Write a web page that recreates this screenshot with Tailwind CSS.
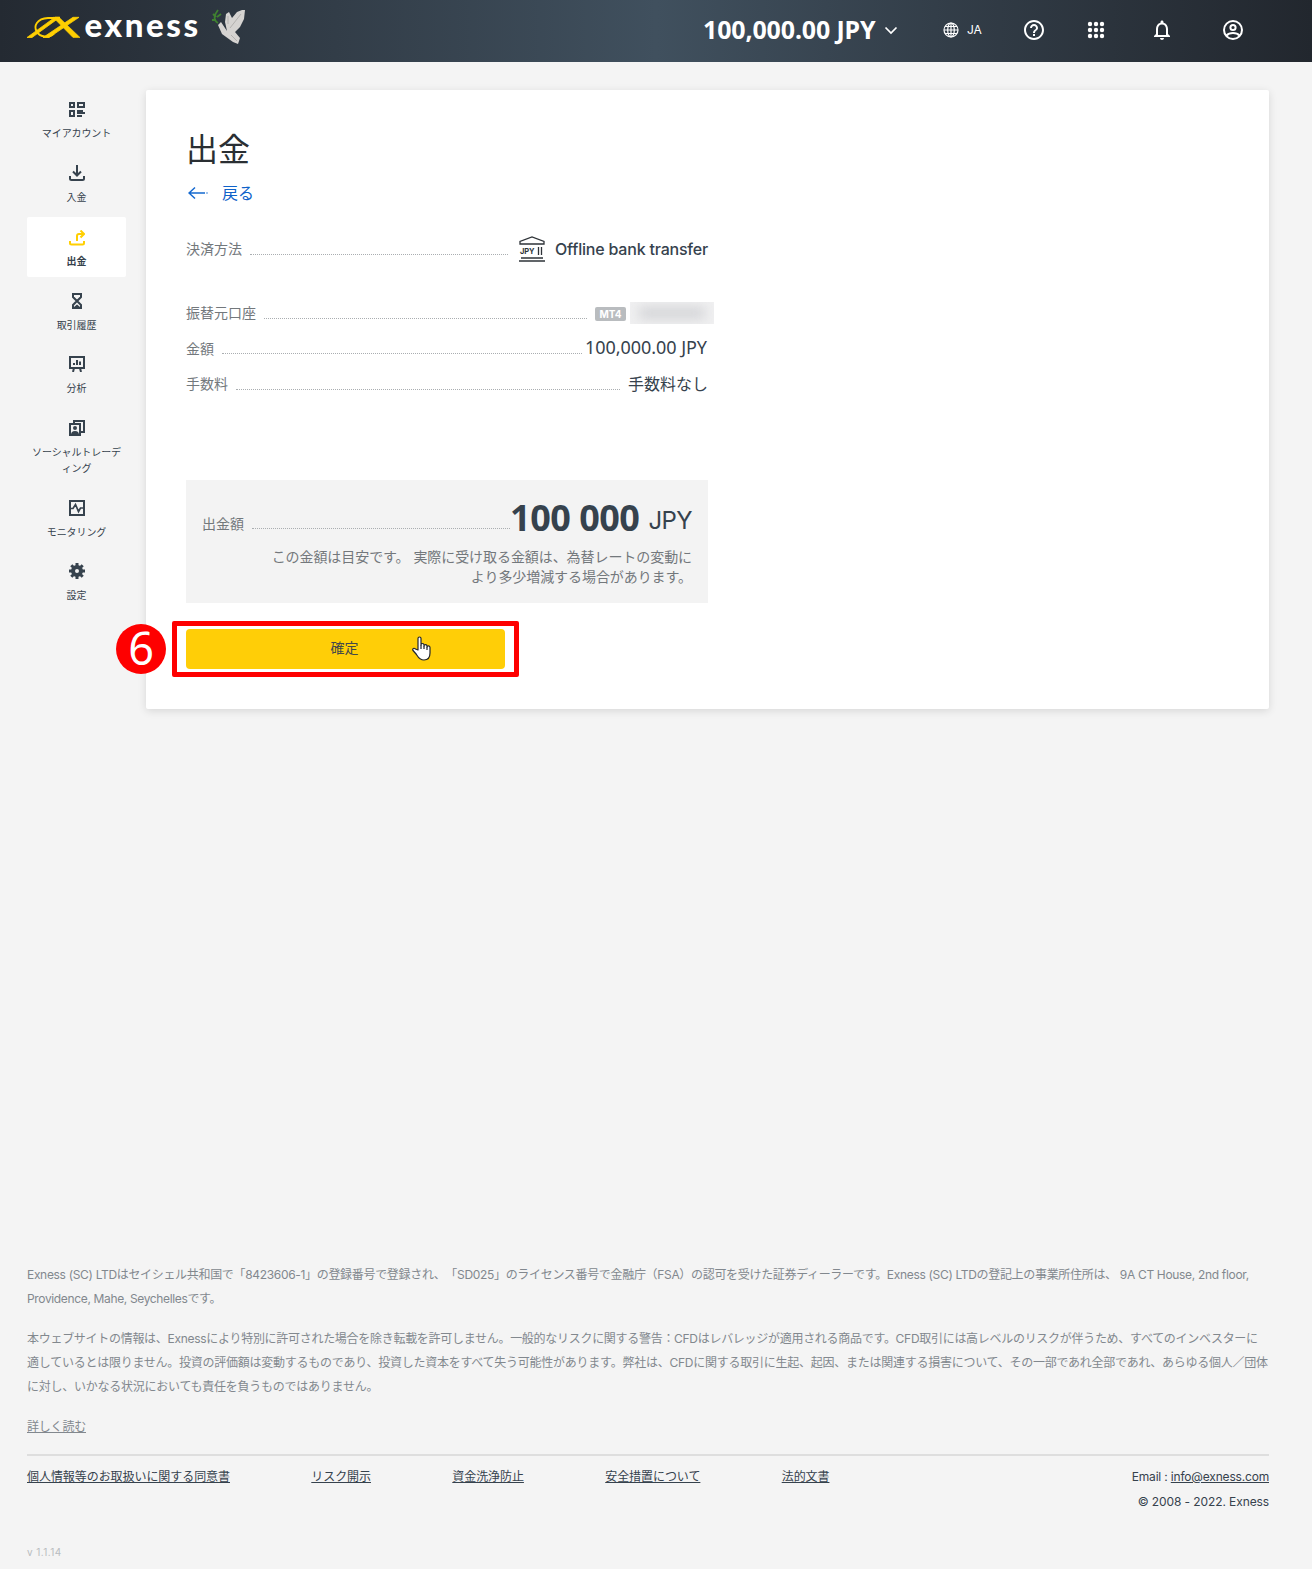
<!DOCTYPE html>
<html lang="ja">

<head>
    <meta charset="UTF-8" />
    <meta name="viewport" content="width=device-width, initial-scale=1.0" />
    <title>出金 - Exness</title>
    <script src="https://cdn.jsdelivr.net/npm/@tailwindcss/browser@4"></script>
</head>

<body class="bg-[#f4f4f4] font-['Inter','Noto_Sans_CJK_JP',sans-serif] text-[#36424d] w-[1312px] h-[1569px] overflow-hidden flex flex-col">

    <header class="h-[62px] pb-[2px] shrink-0 flex items-center text-white bg-linear-to-r from-[#242a32] via-[#40505e] to-[#22272e]">
        <svg class="w-[230px] h-[60px] ml-5 shrink-0" viewBox="20 0 230 60" fill="none">
            <g stroke="#ffcf01">
                <path d="M27 37.500 H32 L60 17.200 H55 Z" fill="#ffcf01" stroke-width="0.800" />
                <path d="M60 18 H48 C37 18.500 33 26 37 32 C40 37 49 38.500 54 33.500" stroke-width="1.900" />
                <path d="M43 37.500 H49 L79 17.300 H73 Z" fill="#ffcf01" stroke-width="0.800" />
                <path d="M53 17.300 H59 L80 37.500 H73 Z" fill="#ffcf01" stroke-width="0.600" />
            </g>
            <text x="84.500" y="37" textLength="113.500" font-family="Lato" font-weight="900" font-size="33" fill="#fff">exness</text>
            <path d="M227 31 L225 22 L226 14 L229 12 L232 18 L237 12 L242 10 L245 10 L244 19 L240 27 L235 32 L240 38 L238 44 L233 42 L222 34 L218 25 L221 22 Z" fill="#d5d3d1" />
            <path d="M230 28 L241 14 M228 24 L228 16 M231 35 L237 41" stroke="#b3b1af" />
            <path d="M218 23 C213 20 214 15 218 10 M213 14 L216 17 M212 20 L216 20 M217 17 L221 14" stroke="#3f8030" stroke-width="1.800" />
        </svg>
        <div class="ml-[453px] w-[173px] text-[25px] font-bold font-['Noto_Sans',sans-serif] whitespace-nowrap tracking-[-0.15px]">100,000.00 JPY</div>
        <svg class="ml-[8px] w-[14px] h-[14px]" viewBox="0 0 14 14" fill="none" stroke="#fff" stroke-width="1.700"><path d="M1.500 4.500 L7 10 L12.500 4.500" /></svg>
        <svg class="ml-[45px] w-4 h-4" viewBox="0 0 16 16" fill="none" stroke="#fff" stroke-width="1.200">
            <circle cx="8" cy="8" r="7" /><ellipse cx="8" cy="8" rx="3.300" ry="7" /><path d="M8 1V15M1 8H15M2 4.500H14M2 11.500H14" />
        </svg>
        <span class="ml-[8px] w-[15px] text-xs">JA</span>
        <svg class="ml-[40px] w-6 h-6" viewBox="0 0 24 24" fill="#fff"><path d="M11 18h2v-2h-2v2zm1-16C6.480 2 2 6.480 2 12s4.480 10 10 10 10-4.480 10-10S17.520 2 12 2zm0 18c-4.410 0-8-3.590-8-8s3.590-8 8-8 8 3.590 8 8-3.590 8-8 8zm0-14c-2.210 0-4 1.790-4 4h2c0-1.100.9-2 2-2s2 .9 2 2c0 2-3 1.750-3 5h2c0-2.250 3-2.500 3-5 0-2.210-1.790-4-4-4z" /></svg>
        <svg class="ml-[38px] w-6 h-6" viewBox="0 0 24 24" fill="#fff">
            <circle cx="6" cy="6" r="2.200" /><circle cx="12" cy="6" r="2.200" /><circle cx="18" cy="6" r="2.200" />
            <circle cx="6" cy="12" r="2.200" /><circle cx="12" cy="12" r="2.200" /><circle cx="18" cy="12" r="2.200" />
            <circle cx="6" cy="18" r="2.200" /><circle cx="12" cy="18" r="2.200" /><circle cx="18" cy="18" r="2.200" />
        </svg>
        <svg class="ml-[42px] w-6 h-6" viewBox="0 0 24 24" fill="#fff"><path d="M12 22c1.100 0 2-.9 2-2h-4c0 1.100.9 2 2 2zm6-6v-5c0-3.070-1.630-5.640-4.500-6.320V4c0-.83-.67-1.500-1.500-1.500s-1.500.67-1.500 1.500v.68C7.640 5.360 6 7.920 6 11v5l-2 2v1h16v-1l-2-2zm-2 1H8v-6c0-2.480 1.510-4.500 4-4.500s4 2.020 4 4.500v6z" /></svg>
        <svg class="ml-[47px] w-6 h-6" viewBox="0 0 24 24" fill="none" stroke="#fff" stroke-width="2">
            <circle cx="12" cy="12" r="9" /><circle cx="12" cy="9.500" r="2.600" /><path d="M5.500 17.500C8.500 14.300 15.500 14.300 18.500 17.500" />
        </svg>
    </header>

    <main class="flex h-[1201px] shrink-0 items-start">
        <nav class="ml-[27px] mt-[27px] w-[99px] flex flex-col gap-[3.700px] text-[10px] leading-4 text-center text-[#36424d] tracking-[-0.1px]">
            <a class="h-[60px] pt-[13px] flex flex-col items-center gap-[7px]">
                <svg class="w-4 h-4 shrink-0" viewBox="0 0 16 16" fill="none" stroke="#36424d" stroke-width="2"><path d="M1 1h4v4H1zM9 1h6v4H9zM1 9h4v5H1zM8 9h6M8 11h8M8 14h5" /></svg>
                <span>マイアカウント</span>
            </a>
            <a class="h-[60px] pt-[12px] flex flex-col items-center gap-2">
                <svg class="w-4 h-4 shrink-0" viewBox="0 0 16 16" fill="none" stroke="#36424d" stroke-width="2"><path d="M8 0v10M4 6.500l4 4 4-4M1 11v2.500q0 1.500 1.500 1.500h11q1.500 0 1.500-1.500V11" /></svg>
                <span>入金</span>
            </a>
            <a class="mt-[0.600px] mb-[-0.600px] h-[60px] pt-[13px] flex flex-col items-center gap-[7px] bg-white rounded-xs font-bold">
                <svg class="w-4 h-4 shrink-0" viewBox="0 0 16 16" fill="none" stroke="#ffcf01" stroke-width="2"><path d="M8 11V6q0-2 2-2h5M11.500 0.500L15 4l-3.500 3.500M1 11v2q0 1.500 1.500 1.500h11q1.500 0 1.500-1.500V11" /></svg>
                <span>出金</span>
            </a>
            <a class="h-[60px] pt-[13px] flex flex-col items-center gap-2">
                <svg class="w-4 h-4 shrink-0" viewBox="0 0 16 16" fill="none" stroke="#36424d" stroke-width="2"><path d="M3 1h10M3 15h10M4 1v3l4 4 4-4V1M4 15v-3l4-4 4 4v3" /><path d="M5 14l3-2.500 3 2.500z" fill="#36424d" stroke="none" /></svg>
                <span>取引履歴</span>
            </a>
            <a class="h-[60px] pt-[12px] flex flex-col items-center gap-2">
                <svg class="w-4 h-4 shrink-0" viewBox="0 0 16 16" fill="none" stroke="#36424d" stroke-width="2"><path d="M1 1h14v11H1zM5 7v2M8 4v5M11 5.500V9M5 12l-1 4M11 12l1 4" /></svg>
                <span>分析</span>
            </a>
            <a class="h-[76px] pt-[13px] flex flex-col items-center gap-2">
                <svg class="w-4 h-4 shrink-0" viewBox="0 0 16 16" fill="none" stroke="#36424d" stroke-width="2"><path d="M1 4h10v11H1zM5 3V1h10v11h-3" /><circle cx="6" cy="8" r="2" fill="#36424d" stroke="none" /><path d="M2 15q0-4 4-4t4 4z" fill="#36424d" stroke="none" /></svg>
                <span>ソーシャルトレーデ<br />ィング</span>
            </a>
            <a class="h-[60px] pt-[13px] flex flex-col items-center gap-2">
                <svg class="w-4 h-4 shrink-0" viewBox="0 0 16 16" fill="none" stroke="#36424d" stroke-width="2"><path d="M1 1h14v14H1z" /><path d="M1 8.500h3l2.500-4 3 7 2-3.500H15" stroke-width="1.700" /></svg>
                <span>モニタリング</span>
            </a>
            <a class="h-[60px] pt-[12px] flex flex-col items-center gap-2">
                <svg class="w-4 h-4 shrink-0" viewBox="0 0 16 16" fill="none" stroke="#36424d"><circle cx="8" cy="8" r="4" stroke-width="4" /><path d="M8 0v3M8 13v3M0 8h3M13 8h3M2.300 2.300l2 2M11.700 11.700l2 2M2.300 13.700l2-2M11.700 4.300l2-2" stroke-width="3" /></svg>
                <span>設定</span>
            </a>
        </nav>

        <section class="relative ml-5 mt-7 w-[1123px] h-[619px] px-10 bg-white rounded-xs shadow-[0_2px_8px_rgba(0,0,0,0.12)]">
            <h1 class="mt-[36px] text-[32px] leading-[48px] text-[#2a2f33]">出金</h1>
            <a class="mt-[7px] h-6 flex items-center text-base text-[#0f62c9]">
                <svg class="w-[20px] h-[14px] ml-[2px] mr-[14px]" viewBox="0 0 20 14" fill="none" stroke="#1569d0" stroke-width="1.500"><path d="M7 1.500L1 7l6 5.500M1 7h16M18.500 7h1" /></svg>
                戻る
            </a>

            <div class="w-[522px]">
                <div class="mt-[32px] h-6 flex items-center text-sm text-[#73787c]">
                    決済方法
                    <i class="grow ml-2 mr-[11px] mt-[11px] border-b border-dotted border-[#aaaeb1]"></i>
                    <svg class="w-[26px] h-[26px]" viewBox="0 0 26 26" fill="none" stroke="#2e3338" stroke-width="1.300">
                        <path d="M1 8V5.500L13 1l12 4.500V8zM19.500 11v8M22.500 11v8M2 22h22M0 25h26" />
                        <text x="1" y="17.500" textLength="14.500" font-size="7.500" font-weight="700" fill="#2e3338" stroke="none">JPY</text>
                    </svg>
                    <span class="ml-[10px] text-base font-medium text-[#36424d] tracking-[-0.2px]">Offline bank transfer</span>
                </div>
                <div class="mt-[40px] h-6 flex items-center text-sm text-[#73787c]">
                    振替元口座
                    <i class="grow ml-2 mr-2 mt-[11px] border-b border-dotted border-[#aaaeb1]"></i>
                    <span class="mt-px w-[31px] h-[14px] rounded-xs bg-[#b9bcbf] text-white text-[10px] leading-[14px] font-bold text-center">MT4</span>
                    <span class="ml-1 mr-[-6px] w-[84px] h-[22px] overflow-hidden bg-[#f0f0f1] flex items-center justify-center"><i class="w-[66px] h-[12px] bg-[#d3d4d7] blur-[6px]"></i></span>
                </div>
                <div class="mt-[11px] h-6 flex items-center text-sm text-[#73787c]">
                    <span class="mt-px">金額</span>
                    <i class="grow ml-2 mr-[3px] mt-[10px] border-b border-dotted border-[#aaaeb1]"></i>
                    <span class="mr-px text-[18px] tracking-[-0.05px] text-[#36424d] font-['Noto_Sans',sans-serif]">100,000.00 JPY</span>
                </div>
                <div class="mt-[12px] h-6 flex items-center text-sm text-[#73787c]">
                    手数料
                    <i class="grow ml-2 mr-2 mt-[10px] border-b border-dotted border-[#aaaeb1]"></i>
                    <span class="text-base text-[#36424d]">手数料なし</span>
                </div>

                <div class="mt-[84px] h-[123px] px-4 pt-[17px] bg-[#f3f3f3]">
                    <div class="h-[42px] flex items-center text-sm text-[#73787c]">
                        <span class="mt-[11px]">出金額</span>
                        <i class="grow ml-2 mt-[20px] border-b border-dotted border-[#aaaeb1]"></i>
                        <b class="mr-[-1px] text-[36px] tracking-[-0.5px] text-[#36424d] font-['Noto_Sans',sans-serif]">100 000</b>
                        <span class="ml-[10px] mt-[5px] text-2xl tracking-[-0.6px] text-[#36424d]">JPY</span>
                    </div>
                    <p class="mt-[8px] text-right text-[14px] leading-5 tracking-[-0.070px] text-[#73787c] whitespace-nowrap">この金額は目安です。 実際に受け取る金額は、為替レートの変動に<br />より多少増減する場合があります。</p>
                </div>

                <button class="mt-[26px] w-[319px] h-10 pb-[2px] pr-[2px] block rounded bg-[#ffce07] text-sm text-[#43484b]">確定</button>
            </div>

            <!-- step marker over the confirm button -->
            <div class="absolute left-[26px] top-[531px] w-[347px] h-[56px] border-[5px] border-[#fe0000] rounded-xs"></div>
            <div class="absolute left-[-30px] top-[534px] w-[50px] h-[50px] rounded-full bg-[#fe0000] text-white text-[45px] leading-[48px] text-center font-['Noto_Sans',sans-serif]">6</div>
            <svg class="absolute left-[266px] top-[546px] w-[19px] h-[25px]" viewBox="0 0 19 25" fill="#fff" stroke="#20242d" stroke-width="1.200" stroke-linejoin="round"><path d="M6 14V2.500C6 .5 9 .5 9 2.500V9c0-2 3-2 3 0v1c0-2 3-1.500 3 0v1c0-1.500 3-1.500 3 .5V17c0 4-2 7-6 7-4.500 0-6-3-7.500-5.500L1 14.500c-1-2 1-3 2.500-1.500z" /><path d="M9 9v4M12 10v3M15 11v3" /></svg>
        </section>
    </main>

    <footer class="mx-[27px] w-[1242px] text-xs leading-6 text-[#82888e] whitespace-nowrap">
        <p class="tracking-[-0.320px] [text-spacing-trim:space-all]">Exness (SC) LTDはセイシェル共和国で「8423606-1」の登録番号で登録され、「SD025」のライセンス番号で金融庁（FSA）の認可を受けた証券ディーラーです。Exness (SC) LTDの登記上の事業所住所は、 9A CT House, 2nd floor,<br /><span class="tracking-[-0.350px]">Providence, Mahe, Seychellesです。</span></p>
        <p class="mt-4 tracking-[-0.250px]"><span class="tracking-[-0.290px]">本ウェブサイトの情報は、Exnessにより特別に許可された場合を除き転載を許可しません。一般的なリスクに関する警告：CFDはレバレッジが適用される商品です。CFD取引には高レベルのリスクが伴うため、すべてのインベスターに</span><br />適しているとは限りません。投資の評価額は変動するものであり、投資した資本をすべて失う可能性があります。弊社は、CFDに関する取引に生起、起因、または関連する損害について、その一部であれ全部であれ、あらゆる個人／団体<br />に対し、いかなる状況においても責任を負うものではありません。</p>
        <p class="mt-4"><a class="underline tracking-[-0.200px]">詳しく読む</a></p>
        <div class="mt-[15px] pt-[9px] border-t-2 border-[#dedede] flex justify-between text-[#36424d]">
            <div class="flex gap-[81.300px] tracking-[-0.060px]">
                <a class="underline">個人情報等のお取扱いに関する同意書</a>
                <a class="underline">リスク開示</a>
                <a class="underline">資金洗浄防止</a>
                <a class="underline">安全措置について</a>
                <a class="underline">法的文書</a>
            </div>
            <div class="mt-[-1px] text-right leading-[25px]">
                <span class="tracking-[-0.180px]">Email : <a class="underline">info@exness.com</a></span><br /><span class="tracking-[-0.100px]">© 2008 - 2022. Exness</span>
            </div>
        </div>
        <p class="mt-[26px] text-[10px] text-[#b8bcc0] tracking-[0.450px]">v 1.1.14</p>
    </footer>
</body>

</html>
